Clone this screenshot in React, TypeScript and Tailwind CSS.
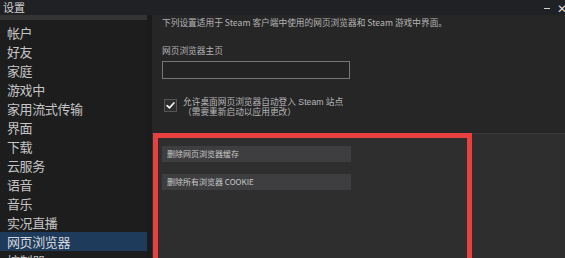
import React from 'react';

const FONT = '"Noto Sans CJK SC", "Noto Sans", "Liberation Sans", sans-serif';
const TIGHT_FONT = '"Liberation Sans", "Noto Sans CJK SC", sans-serif';

const NAV_ITEMS = [
  '帐户',
  '好友',
  '家庭',
  '游戏中',
  '家用流式传输',
  '界面',
  '下载',
  '云服务',
  '语音',
  '音乐',
  '实况直播',
  '网页浏览器',
  '控制器',
];

const SELECTED = '网页浏览器';

function CheckIcon() {
  return (
    <svg viewBox="0 0 12 12" className="w-[9px] h-[9px]">
      <path d="M1.5 6.2 L4.6 9.2 L10.5 2.6" fill="none" stroke="#f2f2f2" strokeWidth="2.2" strokeLinecap="round" strokeLinejoin="round" />
    </svg>
  );
}

export default function App() {
  return (
    <div
      className="relative w-[565px] h-[258px] overflow-hidden bg-[#202125] text-[#c6c6c6] flex flex-col"
      style={{ fontFamily: FONT }}
    >
      {/* title bar */}
      <div className="h-[15px] shrink-0 flex items-center justify-between pl-[3px] pr-0">
        <span className="text-[11px] leading-none text-[#d0d0d0]">设置</span>
        <div className="flex items-center gap-[7px] text-[#d8d8d8]">
          <span className="block w-[6px] h-[1.5px] bg-[#cfcfcf] mt-[2px]" />
          <span className="text-[12px] leading-none -mr-[2px]">✕</span>
        </div>
      </div>

      <div className="flex flex-1 min-h-0">
        {/* sidebar */}
        <aside className="w-[147px] shrink-0 flex flex-col bg-[#1d1d1e]">
          <div className="h-[5px] bg-[#343434] shrink-0" />
          <nav className="flex flex-col pt-[2.5px]">
            {NAV_ITEMS.map((item) => (
              <div
                key={item}
                className={
                  item === SELECTED
                    ? 'h-[19px] flex items-center pl-[7px] text-[13px] leading-none tracking-[-0.4px] bg-[#1f3b5c] text-[#d4d8dd]'
                    : 'h-[19px] flex items-center pl-[7px] text-[13px] leading-none tracking-[-0.4px] text-[#c4c4c4]'
                }
              >
                {item}
              </div>
            ))}
          </nav>
        </aside>

        {/* content */}
        <main className="flex-1 flex flex-col bg-[#262627] border-l-[5px] border-[#1b1b1c]">
          <div className="h-[118px] shrink-0 pl-[10px] pt-[3px] flex flex-col text-[8.7px] leading-none text-[#b4b4b4]">
            <p className="h-[11px] flex items-center">
              下列设置适用于 Steam 客户端中使用的网页浏览器和 Steam 游戏中界面。
            </p>
            <p className="mt-[17px] h-[10px] flex items-center">网页浏览器主页</p>
            <div className="mt-[5px] w-[188px] h-[18px] border border-[#777] bg-[#232324]" />
            <div className="mt-[18px] flex items-start gap-[6px] pl-[2px]">
              <div className="w-[13px] h-[13px] mt-[2px] border border-[#555] bg-[#2e2e30] flex items-center justify-center">
                <CheckIcon />
              </div>
              <div className="flex flex-col text-[#b8b8b8] leading-[10px]" style={{ fontFamily: TIGHT_FONT }}>
                <span className="block h-[10px] whitespace-nowrap">允许桌面网页浏览器自动登入 Steam 站点</span>
                <span className="block h-[10px] whitespace-nowrap">（需要重新启动以应用更改）</span>
              </div>
            </div>
          </div>

          <section className="flex-1 bg-[#2e2e2f] border-t border-[#3a3a3b] pl-[10px] pt-[12px] flex flex-col gap-[12px]">
            <button className="w-[189px] h-[16px] bg-[#3e3e40] text-left pl-[5px] text-[8px] leading-none text-[#c8c8c8]">
              删除网页浏览器缓存
            </button>
            <button className="w-[189px] h-[16px] bg-[#3e3e40] text-left pl-[5px] text-[8px] leading-none text-[#c8c8c8]">
              删除所有浏览器 COOKIE
            </button>
          </section>
        </main>
      </div>

      {/* red annotation frame */}
      <div className="absolute left-[153px] top-[133px] w-[319px] h-[140px] border-[5px] border-[#e8403f] pointer-events-none" />
    </div>
  );
}
